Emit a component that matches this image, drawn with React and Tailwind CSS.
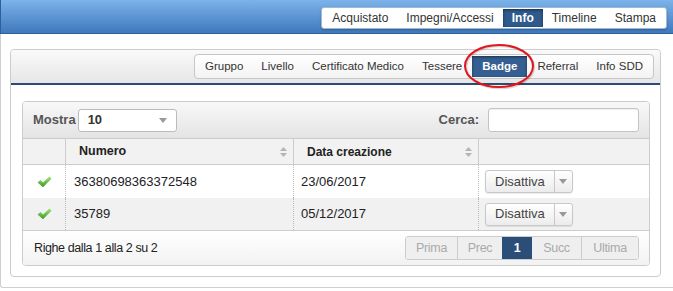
import React from "react";

const TOP_TABS = ["Acquistato", "Impegni/Accessi", "Info", "Timeline", "Stampa"];
const SUB_TABS = ["Gruppo", "Livello", "Certificato Medico", "Tessere", "Badge", "Referral", "Info SDD"];

const ROWS = [
  { numero: "36380698363372548", data: "23/06/2017", bg: "bg-white" },
  { numero: "35789", data: "05/12/2017", bg: "bg-[#f1f1f1]" },
];

const CheckIcon = () => (
  <svg width="15" height="12" viewBox="0 0 15 12">
    <defs>
      <linearGradient id="chk" x1="0" y1="0" x2="0" y2="1">
        <stop offset="0" stopColor="#9be676" />
        <stop offset="1" stopColor="#3e9a22" />
      </linearGradient>
    </defs>
    <path d="M0.5 6.5 L3.5 4 L6 6.5 L12.5 0.5 L14.5 2.8 L6 11.2 Z" fill="url(#chk)" />
  </svg>
);

const SortIcon = () => (
  <svg width="7" height="10" viewBox="0 0 7 10">
    <path d="M3.5 0 L7 4 L0 4 Z" fill="#b5b5b5" />
    <path d="M3.5 10 L7 6 L0 6 Z" fill="#b5b5b5" />
  </svg>
);

const Caret = () => (
  <svg width="8" height="5" viewBox="0 0 8 5">
    <path d="M0 0 L8 0 L4 5 Z" fill="#999" />
  </svg>
);

const ActionButton = () => (
  <div className="flex h-[23px] rounded-[3px] border border-[#c8c8c8] bg-gradient-to-b from-white to-[#ececec] shadow-[0_1px_1px_rgba(0,0,0,0.08)]">
    <span className="flex items-center px-[9px] text-[13px] text-[#444]">Disattiva</span>
    <span className="flex w-[18px] items-center justify-center border-l border-[#c8c8c8]">
      <Caret />
    </span>
  </div>
);

export default function App() {
  return (
    <div className="h-[291px] w-[673px] overflow-hidden bg-white text-[#333]" style={{ fontFamily: '"Liberation Sans", Arial, sans-serif' }}>
      {/* Top bar */}
      <div className="flex h-[34px] justify-end border-b border-l border-[#2d5f9a] bg-gradient-to-b from-[#7cb3ea] to-[#3f79bc] pr-[6px] pt-[7px]">
        <div className="flex h-[22px] items-center rounded-[3px] border border-[#9fb8d6] bg-white px-[1px] text-[12px] shadow-[0_1px_2px_rgba(0,0,0,0.25)]">
          {TOP_TABS.map((t) =>
            t === "Info" ? (
              <span key={t} className="flex h-[18px] items-center bg-[#2f5a8c] px-[9px] font-bold text-white shadow-[inset_0_1px_3px_rgba(0,0,0,0.5)]">
                {t}
              </span>
            ) : (
              <span key={t} className="px-[9px] text-[#333]">{t}</span>
            )
          )}
        </div>
      </div>

      {/* Page body */}
      <div className="h-[254px] border-b border-l border-[#cfcfcf] rounded-bl-[3px] pl-[9px] pt-[15px]">
        <div className="w-[651px] rounded-[4px] border border-[#cccccc] bg-white">
          {/* Panel header with sub tabs */}
          <div className="relative flex h-[35px] items-center justify-end rounded-t-[4px] border-b-2 border-[#2c4c76] bg-gradient-to-b from-[#fafafa] to-[#e6e6e6] pr-[6px]">
            <div className="flex h-[25px] items-center rounded-[4px] border border-[#c6c6c6] bg-gradient-to-b from-white to-[#f3f3f3] px-[1px] text-[11.5px]">
              {SUB_TABS.map((t) =>
                t === "Badge" ? (
                  <span key={t} className="mx-[1px] flex h-[21px] items-center bg-[#355f92] px-[10px] font-bold text-white shadow-[inset_0_1px_3px_rgba(0,0,0,0.5)]">
                    {t}
                  </span>
                ) : (
                  <span key={t} className="px-[9px] text-[#333]">{t}</span>
                )
              )}
            </div>
            {/* Red annotation ellipse */}
            <svg className="pointer-events-none absolute left-[448px] top-[-8px]" width="80" height="48" viewBox="0 0 80 48">
              <ellipse cx="41" cy="25" rx="34" ry="21" fill="none" stroke="rgba(0,0,0,0.15)" strokeWidth="2.5" />
              <ellipse cx="40" cy="24" rx="34" ry="21" fill="none" stroke="#e3161b" strokeWidth="2" />
            </svg>
          </div>

          {/* Panel body */}
          <div className="px-[11px] pb-[10px] pt-[16px] pr-[10px]">
            <div className="overflow-hidden rounded-[4px] border border-[#cccccc]">
              {/* Toolbar */}
              <div className="flex h-[37px] items-center justify-between border-b border-[#cccccc] bg-gradient-to-b from-[#f8f8f8] to-[#e4e4e4] px-[10px]">
                <div className="flex items-center gap-[2px]">
                  <span className="text-[13px] font-bold text-[#555]">Mostra</span>
                  <div className="flex h-[23px] w-[99px] items-center justify-between rounded-[3px] border border-[#bbbbbb] bg-white px-[9px]">
                    <span className="text-[13px] font-bold text-[#333]">10</span>
                    <Caret />
                  </div>
                </div>
                <div className="flex items-center gap-[9px]">
                  <span className="text-[13px] font-bold text-[#555]">Cerca:</span>
                  <div className="h-[24px] w-[151px] rounded-[3px] border border-[#c4c4c4] bg-white shadow-[inset_0_1px_1px_rgba(0,0,0,0.06)]" />
                </div>
              </div>

              {/* Table */}
              <div className="grid grid-cols-[43px_228px_185px_1fr] text-[13px]">
                <div className="h-[26px] border-b border-r border-[#cccccc] bg-[#f2f2f2]" />
                <div className="flex h-[26px] items-center justify-between border-b border-r border-[#cccccc] bg-[#f2f2f2] pl-[13px] pr-[6px] text-[12.5px] font-bold text-[#222]">
                  <span>Numero</span>
                  <SortIcon />
                </div>
                <div className="flex h-[26px] items-center justify-between border-b border-r border-[#cccccc] bg-[#f2f2f2] pl-[13px] pr-[6px] text-[12px] font-bold text-[#222]">
                  <span>Data creazione</span>
                  <SortIcon />
                </div>
                <div className="h-[26px] border-b border-[#cccccc] bg-[#f2f2f2]" />

                {ROWS.map((r, i) => (
                  <React.Fragment key={r.numero}>
                    <div className={`flex ${i === 0 ? "h-[33px]" : "h-[32px]"} items-center justify-center border-r border-dotted border-[#bbbbbb] ${r.bg}`}>
                      <CheckIcon />
                    </div>
                    <div className={`flex items-center border-r border-dotted border-[#bbbbbb] pl-[8px] text-[#222] ${r.bg}`}>{r.numero}</div>
                    <div className={`flex items-center border-r border-dotted border-[#bbbbbb] pl-[7px] text-[#222] ${r.bg}`}>{r.data}</div>
                    <div className={`flex items-center pl-[6px] ${r.bg}`}>
                      <ActionButton />
                    </div>
                  </React.Fragment>
                ))}
              </div>

              {/* Footer */}
              <div className="flex h-[35px] items-center justify-between border-t border-[#cccccc] bg-gradient-to-b from-white to-[#f2f2f2] pl-[11px] pr-[10px]">
                <span className="text-[12.5px] tracking-[-0.4px] text-[#222]">Righe dalla 1 alla 2 su 2</span>
                <div className="flex h-[24px] overflow-hidden rounded-[3px] border border-[#cccccc] text-[12.5px] tracking-[-0.3px] text-[#aaaaaa]">
                  <span className="flex w-[51px] items-center justify-center bg-[#efefef]">Prima</span>
                  <span className="flex w-[45px] items-center justify-center border-l border-[#cccccc] bg-[#efefef]">Prec</span>
                  <span className="flex w-[30px] items-center justify-center bg-[#2b4e78] font-bold text-white">1</span>
                  <span className="flex w-[50px] items-center justify-center border-r border-[#cccccc] bg-[#efefef]">Succ</span>
                  <span className="flex w-[56px] items-center justify-center bg-[#efefef]">Ultima</span>
                </div>
              </div>
            </div>
          </div>
        </div>
      </div>
    </div>
  );
}
